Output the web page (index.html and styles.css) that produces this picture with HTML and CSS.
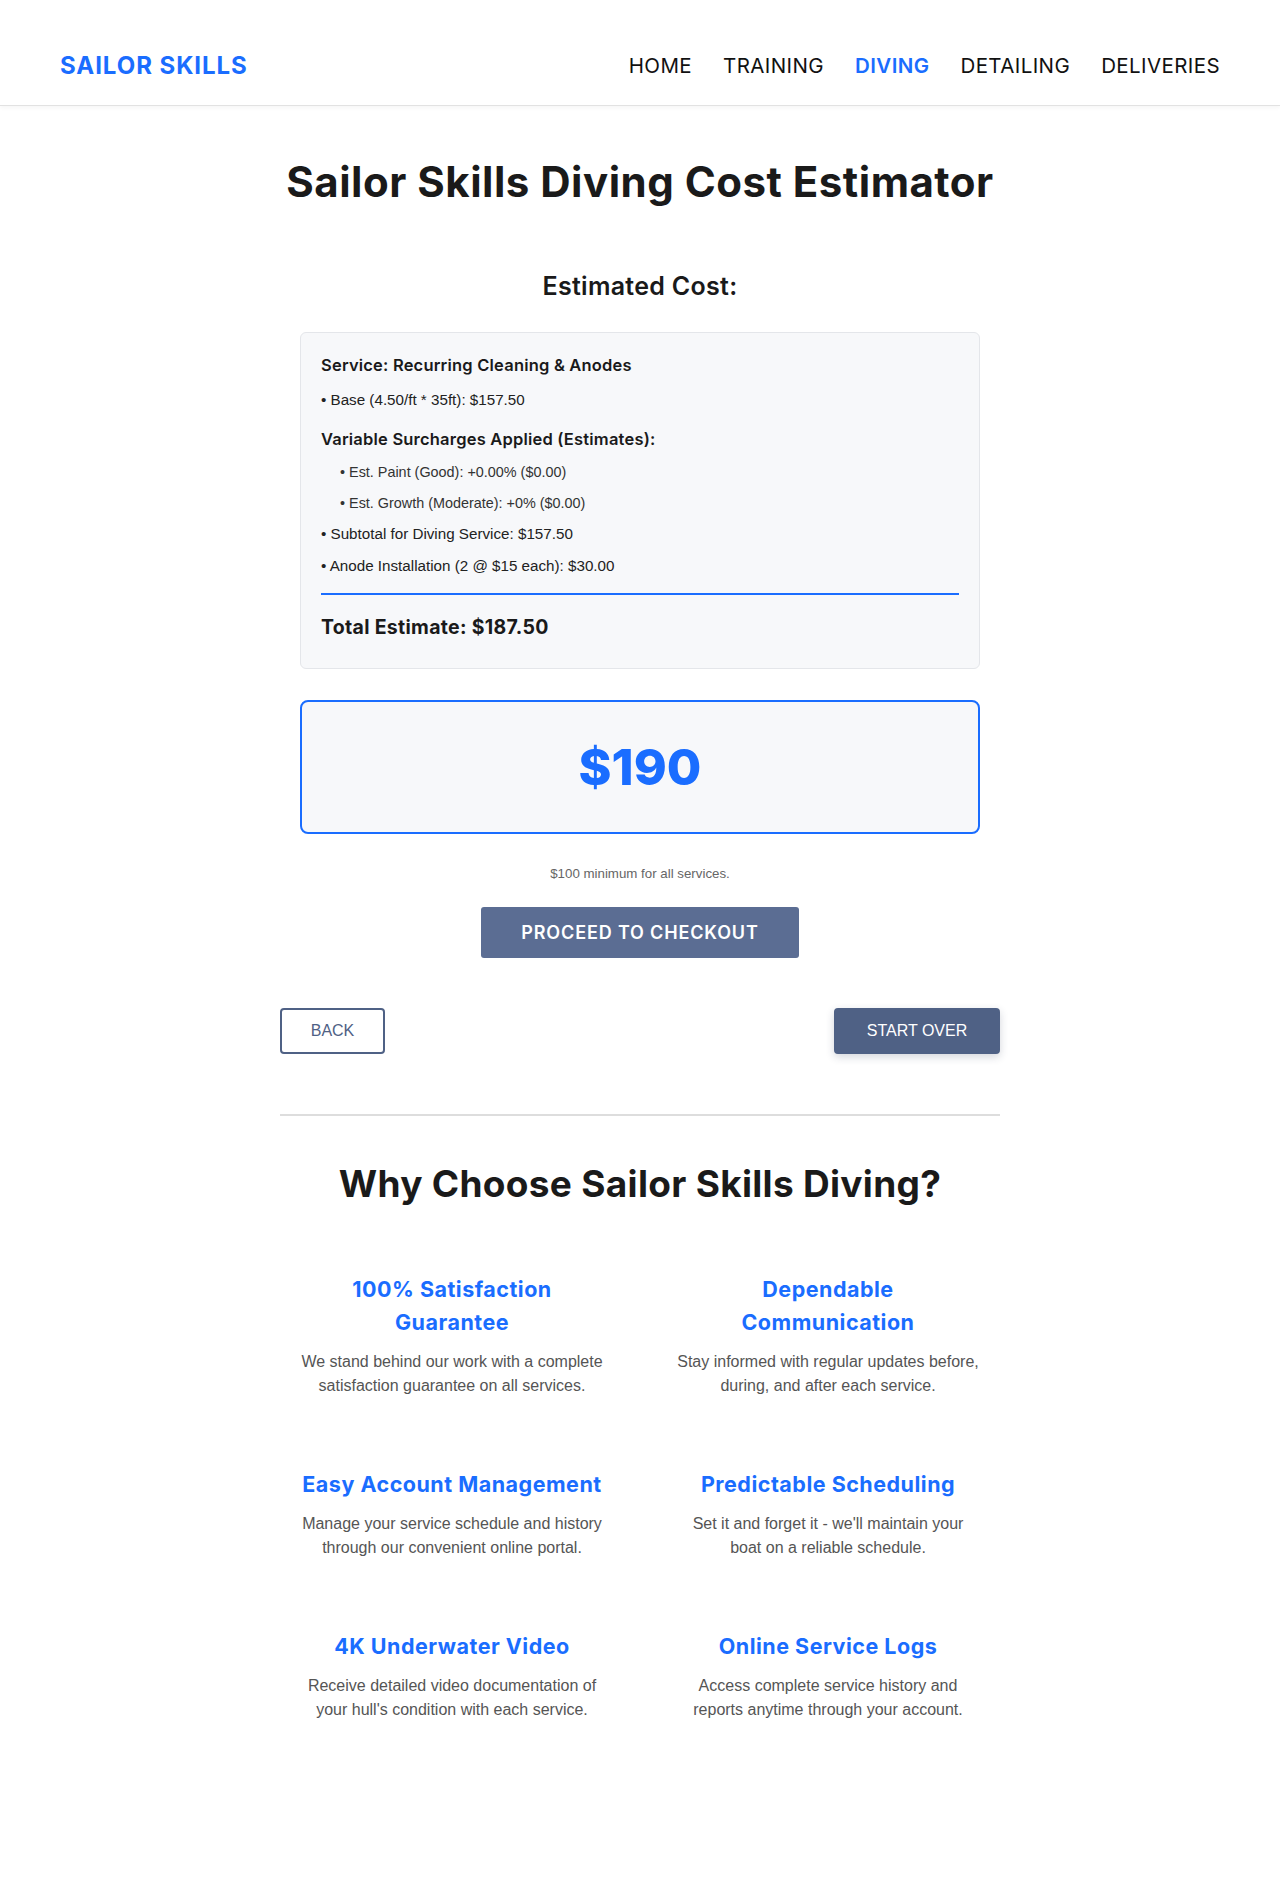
FILE: index.html
```html
<!DOCTYPE html>
<html lang="en">
<head>
<meta charset="utf-8">
<title>Sailor Skills Diving Cost Estimator</title>
<link rel="stylesheet" href="styles.css">
</head>
<body>
<header class="site-header">
  <a class="logo" href="#">SAILOR SKILLS</a>
  <nav class="nav">
    <a href="#">HOME</a>
    <a href="#">TRAINING</a>
    <a href="#" class="active">DIVING</a>
    <a href="#">DETAILING</a>
    <a href="#">DELIVERIES</a>
  </nav>
</header>

<main class="container">
  <h1 class="page-title">Sailor Skills Diving Cost Estimator</h1>

  <section class="results">
    <h2 class="results-title">Estimated Cost:</h2>

    <div class="breakdown">
      <div class="svc-title">Service: Recurring Cleaning &amp; Anodes</div>
      <div class="line">• Base (4.50/ft * 35ft): $157.50</div>
      <div class="sub-title">Variable Surcharges Applied (Estimates):</div>
      <div class="sub-line">• Est. Paint (Good): +0.00% ($0.00)</div>
      <div class="sub-line">• Est. Growth (Moderate): +0% ($0.00)</div>
      <div class="line">• Subtotal for Diving Service: $157.50</div>
      <div class="line">• Anode Installation (2 @ $15 each): $30.00</div>
      <div class="total">Total Estimate: $187.50</div>
    </div>

    <div class="price-box">$190</div>

    <p class="minimum">$100 minimum for all services.</p>

    <div class="checkout-row">
      <button class="btn-checkout">PROCEED TO CHECKOUT</button>
    </div>
  </section>

  <div class="nav-buttons">
    <button class="btn-back">BACK</button>
    <button class="btn-start">START OVER</button>
  </div>

  <hr class="divider">

  <section class="why">
    <h2 class="why-title">Why Choose Sailor Skills Diving?</h2>
    <div class="features">
      <div class="feature">
        <h3>100% Satisfaction Guarantee</h3>
        <p>We stand behind our work with a complete satisfaction guarantee on all services.</p>
      </div>
      <div class="feature">
        <h3>Dependable Communication</h3>
        <p>Stay informed with regular updates before, during, and after each service.</p>
      </div>
      <div class="feature">
        <h3>Easy Account Management</h3>
        <p>Manage your service schedule and history through our convenient online portal.</p>
      </div>
      <div class="feature">
        <h3>Predictable Scheduling</h3>
        <p>Set it and forget it - we'll maintain your boat on a reliable schedule.</p>
      </div>
      <div class="feature">
        <h3>4K Underwater Video</h3>
        <p>Receive detailed video documentation of your hull's condition with each service.</p>
      </div>
      <div class="feature">
        <h3>Online Service Logs</h3>
        <p>Access complete service history and reports anytime through your account.</p>
      </div>
    </div>
  </section>
</main>
</body>
</html>
```

FILE: styles.css
```css
* { box-sizing: border-box; }

html, body {
  margin: 0;
  padding: 0;
  background: #ffffff;
}

body {
  font-family: "Liberation Sans", Arial, sans-serif;
  color: #1a1a1a;
  min-height: 1899px;
}

.site-header {
  height: 106px;
  padding: 25px 60px 0 60px;
  display: flex;
  justify-content: space-between;
  align-items: center;
  border-bottom: 1px solid #e2e2e2;
  box-shadow: 0 2px 4px rgba(0, 0, 0, 0.04);
}

.logo {
  font-family: "Inter", sans-serif;
  font-weight: 700;
  font-size: 24px;
  letter-spacing: 0.95px;
  color: #1a6dff;
  text-decoration: none;
}

.nav {
  display: flex;
  gap: 31px;
}

.nav a {
  font-family: "Inter", sans-serif;
  font-weight: 400;
  font-size: 20.5px;
  letter-spacing: 0.4px;
  color: #111111;
  text-decoration: none;
}

.nav a.active {
  color: #1a6dff;
  font-weight: 600;
}

.container {
  width: 720px;
  margin: 0 auto;
}

.page-title {
  font-family: "Inter", sans-serif;
  font-weight: 700;
  font-size: 42px;
  line-height: 48px;
  letter-spacing: 0.5px;
  text-align: center;
  margin: 52px 0 0 0;
  color: #1a1a1a;
}

.results {
  margin: 0 20px;
}

.results-title {
  font-family: "Inter", sans-serif;
  font-weight: 600;
  font-size: 25px;
  line-height: 30px;
  letter-spacing: 0.3px;
  text-align: center;
  margin: 65px 0 31px 0;
  color: #1a1a1a;
}

.breakdown {
  background: #f7f8fa;
  border: 1px solid #e4e6ea;
  border-radius: 6px;
  padding: 20px 20px 28px 20px;
}

.svc-title,
.sub-title {
  font-family: "Inter", sans-serif;
  font-weight: 600;
  font-size: 16.5px;
  line-height: 24px;
  letter-spacing: 0.2px;
  color: #1a1a1a;
}

.svc-title { margin-bottom: 12px; }

.sub-title { margin: 16px 0 11px 0; }

.line {
  font-size: 15.2px;
  line-height: 22px;
  color: #222222;
}

.line + .line { margin-top: 10px; }

.sub-line {
  font-size: 14.4px;
  line-height: 20px;
  color: #333333;
  padding-left: 19px;
  margin-bottom: 10.5px;
}

.sub-line + .line { margin-top: 4px; }

.total {
  border-top: 2px solid #1a6dff;
  margin-top: 16px;
  padding-top: 19px;
  font-family: "Inter", sans-serif;
  font-weight: 700;
  font-size: 19.5px;
  line-height: 26px;
  letter-spacing: 0.3px;
  color: #1a1a1a;
}

.price-box {
  margin-top: 31px;
  height: 134px;
  display: flex;
  align-items: center;
  justify-content: center;
  background: #f7f8fa;
  border: 2px solid #1a6dff;
  border-radius: 8px;
  font-family: "Inter", sans-serif;
  font-weight: 800;
  font-size: 50px;
  color: #1a6dff;
}

.minimum {
  text-align: center;
  font-size: 13.3px;
  line-height: 18px;
  color: #666666;
  margin: 31px 0 24px 0;
}

.checkout-row {
  display: flex;
  justify-content: center;
}

.btn-checkout {
  width: 318px;
  height: 51px;
  border: none;
  border-radius: 3px;
  background: #5b6d93;
  color: #ffffff;
  font-family: "Inter", sans-serif;
  font-weight: 600;
  font-size: 18px;
  letter-spacing: 0.85px;
  cursor: pointer;
}

.nav-buttons {
  display: flex;
  justify-content: space-between;
  margin-top: 50px;
}

.btn-back,
.btn-start {
  height: 46px;
  border: 2px solid #4f6185;
  border-radius: 4px;
  font-family: "Liberation Sans", Arial, sans-serif;
  font-size: 16px;
  padding: 0 28px;
  cursor: pointer;
}

.btn-back {
  width: 105px;
  background: #ffffff;
  color: #4f6185;
}

.btn-start {
  width: 166px;
  background: #4f6185;
  color: #ffffff;
  box-shadow: 0 3px 8px rgba(40, 50, 80, 0.2);
}

.divider {
  border: none;
  border-top: 2px solid #dddddd;
  margin: 60px 0 0 0;
}

.why-title {
  font-family: "Inter", sans-serif;
  font-weight: 700;
  font-size: 37px;
  line-height: 44px;
  letter-spacing: 0.3px;
  text-align: center;
  margin: 46px 0 67px 0;
  color: #1a1a1a;
}

.features {
  display: grid;
  grid-template-columns: 1fr 1fr;
  column-gap: 32px;
  row-gap: 70px;
}

.feature {
  padding: 0 20px;
  text-align: center;
}

.feature h3 {
  font-family: "Inter", sans-serif;
  font-weight: 700;
  font-size: 21.5px;
  line-height: 33px;
  letter-spacing: 0.5px;
  color: #1a6dff;
  margin: 0 0 11px 0;
}

.feature p {
  font-size: 16px;
  line-height: 24px;
  color: #555555;
  margin: 0;
}
```
